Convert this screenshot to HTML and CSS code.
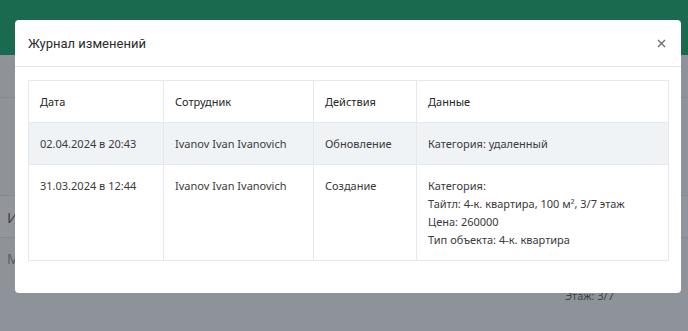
FILE: index.html
```html
<!DOCTYPE html>
<html lang="ru">
<head>
<meta charset="utf-8">
<title>Журнал изменений</title>
<link rel="stylesheet" href="styles.css">
</head>
<body>
<div class="page">
  <header class="topbar"></header>
  <div class="bg-content">
    <div class="bg-row bg-row-a"></div>
    <div class="bg-row bg-row-b"></div>
    <div class="bg-row bg-row-c"><span class="bg-title">И</span></div>
    <div class="bg-row bg-row-d"><span class="bg-muted">М</span></div>
    <div class="bg-floor">Этаж: 3/7</div>
  </div>
</div>
<div class="modal">
  <div class="modal-header">
    <h5 class="modal-title">Журнал изменений</h5>
    <button class="modal-close" type="button" aria-label="Закрыть">
      <svg width="9" height="9" viewBox="0 0 9 9"><path d="M1 1L8 8M8 1L1 8" stroke="#6f6f6f" stroke-width="1.4" fill="none"/></svg>
    </button>
  </div>
  <div class="modal-body">
    <table class="log">
      <colgroup>
        <col class="c1"><col class="c2"><col class="c3"><col class="c4">
      </colgroup>
      <thead>
        <tr><th>Дата</th><th>Сотрудник</th><th>Действия</th><th>Данные</th></tr>
      </thead>
      <tbody>
        <tr class="striped">
          <td>02.04.2024 в 20:43</td>
          <td>Ivanov Ivan Ivanovich</td>
          <td>Обновление</td>
          <td>Категория: удаленный</td>
        </tr>
        <tr>
          <td>31.03.2024 в 12:44</td>
          <td>Ivanov Ivan Ivanovich</td>
          <td>Создание</td>
          <td>Категория:<br>Тайтл: 4-к. квартира, 100 м², 3/7 этаж<br>Цена: 260000<br>Тип объекта: 4-к. квартира</td>
        </tr>
      </tbody>
    </table>
  </div>
</div>
</body>
</html>
```
FILE: styles.css
```css
* { box-sizing: border-box; }
html, body { margin: 0; padding: 0; }
body {
  width: 688px;
  height: 331px;
  overflow: hidden;
  background: #8e9399;
  font-family: "Noto Sans", "Open Sans", sans-serif;
  position: relative;
}
.page { width: 100%; height: 100%; }
.topbar { height: 55px; background: #1a6a4f; }
.bg-row { border-bottom: 1px solid #868a90; }
.bg-row-a { height: 43px; }
.bg-row-b { height: 98px; }
.bg-row-c { height: 42px; background: #92969c; display: flex; align-items: center; padding-left: 7px; }
.bg-row-d { height: 40px; border-bottom: none; display: flex; align-items: center; padding-left: 7px; }
.bg-title { color: #40343a; font-size: 15px; font-family: "Open Sans", sans-serif; }
.bg-muted { color: #55595f; font-size: 14px; font-family: "Open Sans", sans-serif; }
.bg-floor { margin: 10px 0 0 565px; color: #3e4248; font-size: 11px; }
.modal {
  position: absolute;
  left: 15px;
  top: 20px;
  width: 666px;
  height: 273px;
  background: #fff;
  border-radius: 4px;
  display: flex;
  flex-direction: column;
}
.modal-header {
  height: 47px;
  border-bottom: 1px solid #e3e5e8;
  display: flex;
  align-items: center;
  justify-content: space-between;
  padding: 0 15px 0 13px;
}
.modal-title {
  margin: 0;
  font-family: Roboto, sans-serif;
  font-weight: 400;
  font-size: 13px;
  color: #2b2b2b;
}
.modal-close {
  border: 0;
  background: none;
  padding: 0;
  width: 10px;
  height: 10px;
  display: flex;
  align-items: center;
  justify-content: center;
  margin-top: 1px;
}
.modal-body { padding: 13px 13px 0 13px; }
.log {
  width: 640px;
  border-collapse: collapse;
  table-layout: fixed;
  font-size: 11px;
  color: #3a3a3a;
  border: 1px solid #e6e8eb;
}
.c1 { width: 135px; }
.c2 { width: 150px; }
.c3 { width: 103px; }
.c4 { width: 252px; }
.log th, .log td {
  border: 1px solid #e6e8eb;
  padding: 11.5px 11px;
  text-align: left;
  vertical-align: top;
  line-height: 18px;
  font-weight: 400;
  white-space: nowrap;
}
.log th { color: #262626; }
.striped td { background: #f0f3f6; }
```
